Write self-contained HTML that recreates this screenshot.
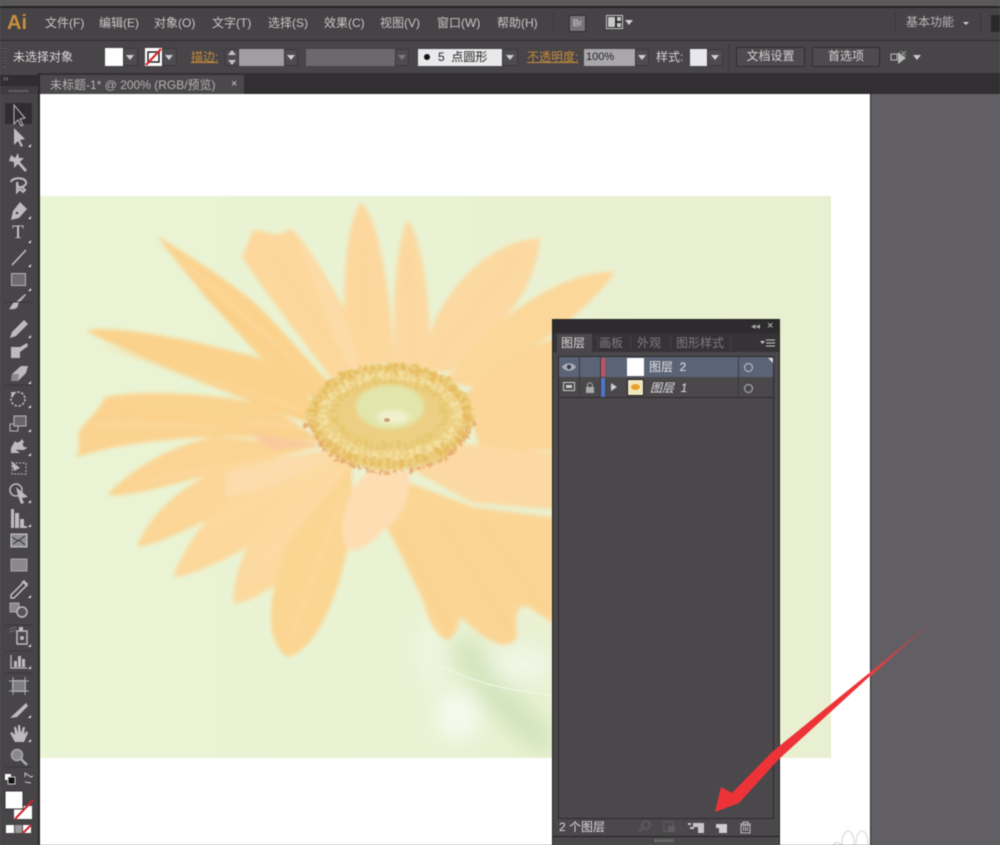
<!DOCTYPE html>
<html lang="zh"><head><meta charset="utf-8"><title>Illustrator</title>
<style>
html,body{margin:0;padding:0;background:#615f63}
#p{position:relative;width:1000px;height:845px;overflow:hidden;background:#615f63;font-family:"Liberation Sans","Noto Sans CJK SC",sans-serif;font-size:12px;color:#c9c7c6;filter:blur(.4px)}
#p div,#p span{position:absolute}
span{white-space:nowrap;line-height:14px}
.dd{background:#4e4c4f;border:1px solid #3a383b;box-sizing:border-box}
.tri{width:0;height:0;border-left:4px solid transparent;border-right:4px solid transparent;border-top:5px solid #d0cfd0}
.btn{background:#4d4b4e;border:1px solid #2f2d30;box-sizing:border-box;text-align:center;line-height:17px;color:#d5d3d3;height:20px}
.o{color:#c98c3c;text-decoration:underline}
</style></head><body><div id="p">
<!-- top chrome -->
<div style="left:0;top:0;width:1000px;height:6px;background:#5a5859"></div>
<div style="left:0;top:6px;width:1000px;height:2px;background:#262426"></div>
<div style="left:0;top:8px;width:1000px;height:32px;background:#464347"></div>
<div style="left:0;top:40px;width:1000px;height:1px;background:#2f2d2f"></div>
<div style="left:0;top:41px;width:1000px;height:32px;background:#474548"></div>
<div style="left:0;top:73px;width:1000px;height:21px;background:#312f31"></div>
<span style="left:7px;top:11px;font-size:20px;line-height:24px;font-weight:bold;color:#c98f3d">Ai</span>
<span style="left:45px;top:16px">文件(F)</span><span style="left:99px;top:16px">编辑(E)</span><span style="left:154px;top:16px">对象(O)</span><span style="left:212px;top:16px">文字(T)</span><span style="left:268px;top:16px">选择(S)</span><span style="left:324px;top:16px">效果(C)</span><span style="left:380px;top:16px">视图(V)</span><span style="left:437px;top:16px">窗口(W)</span><span style="left:497px;top:16px">帮助(H)</span>
<div style="left:553px;top:12px;width:1px;height:20px;background:#39373a"></div>
<div style="left:569px;top:15px;width:15px;height:15px;background:#777578;border:1px solid #2f2d30;font-size:9px;line-height:15px;text-align:center;color:#d0d0d0">Br</div>
<div style="left:606px;top:15px;width:17px;height:14px;background:#2a282a;border:1px solid #ccc;box-sizing:border-box"></div>
<div style="left:608px;top:17px;width:7px;height:10px;background:#c9c8c9"></div><div style="left:617px;top:17px;width:4px;height:4px;background:#c9c8c9"></div><div style="left:617px;top:23px;width:4px;height:4px;background:#c9c8c9"></div>
<div class="tri" style="left:625px;top:20px"></div>
<div style="left:895px;top:12px;width:1px;height:20px;background:#39373a"></div>
<span style="left:906px;top:15px;color:#b9b7b7">基本功能</span>
<div class="tri" style="left:963px;top:22px;border-left-width:3px;border-right-width:3px;border-top-width:3px"></div>
<div style="left:980px;top:12px;width:1px;height:20px;background:#39373a"></div>
<div style="left:991px;top:15px;width:9px;height:17px;background:#2a282b"></div>
<!-- control bar -->
<div style="left:4px;top:48px;width:2px;height:19px;background:repeating-linear-gradient(#7a787a 0 1px,#333 1px 3px)"></div>
<span style="left:13px;top:50px;color:#dcdada">未选择对象</span>
<div style="left:105px;top:48px;width:18px;height:18px;background:#fff"></div>
<div class="dd" style="left:123px;top:48px;width:15px;height:18px"></div><div class="tri" style="left:126px;top:55px"></div>
<div style="left:145px;top:48px;width:17px;height:18px;background:#fff"></div>
<svg style="position:absolute;left:145px;top:48px" width="17" height="18"><rect x="3" y="4" width="11" height="10" fill="none" stroke="#222" stroke-width="1.5"/><path d="M1 17L16 1" stroke="#d4262c" stroke-width="2.2"/></svg>
<div class="dd" style="left:162px;top:48px;width:15px;height:18px"></div><div class="tri" style="left:165px;top:55px"></div>
<span class="o" style="left:191px;top:50px">描边:</span>
<div class="dd" style="left:225px;top:49px;width:14px;height:17px"></div>
<div style="left:228px;top:50px;width:0;height:0;border-left:4px solid transparent;border-right:4px solid transparent;border-bottom:5px solid #c4c3c4"></div>
<div class="tri" style="left:228px;top:60px;border-top-color:#c4c3c4"></div>
<div style="left:239px;top:49px;width:45px;height:17px;background:#a09ea2"></div>
<div class="dd" style="left:284px;top:49px;width:14px;height:17px"></div><div class="tri" style="left:287px;top:55px"></div>
<div style="left:306px;top:49px;width:89px;height:17px;background:#6b696c"></div>
<div class="dd" style="left:395px;top:49px;width:14px;height:17px"></div><div class="tri" style="left:398px;top:55px;border-top-color:#7d7b7e"></div>
<div style="left:418px;top:49px;width:84px;height:17px;background:#e9e8ea"></div>
<div style="left:424px;top:54px;width:6px;height:6px;border-radius:50%;background:#111"></div>
<span style="left:438px;top:50px;color:#222">5&nbsp; 点圆形</span>
<div class="dd" style="left:502px;top:49px;width:16px;height:17px"></div><div class="tri" style="left:506px;top:55px"></div>
<span class="o" style="left:527px;top:50px">不透明度:</span>
<div style="left:584px;top:49px;width:51px;height:17px;background:#a9a7aa"></div>
<span style="left:586px;top:50px;color:#222;font-size:11px">100%</span>
<div class="dd" style="left:635px;top:49px;width:14px;height:17px"></div><div class="tri" style="left:638px;top:55px"></div>
<span style="left:656px;top:50px;color:#d5d3d3">样式:</span>
<div style="left:690px;top:49px;width:17px;height:17px;background:#e9e7ee"></div>
<div class="dd" style="left:707px;top:49px;width:16px;height:17px"></div><div class="tri" style="left:711px;top:55px"></div>
<div style="left:728px;top:44px;width:1px;height:28px;background:#3b393c"></div>
<div class="btn" style="left:736px;top:47px;width:69px">文档设置</div>
<div class="btn" style="left:812px;top:47px;width:68px">首选项</div>
<svg style="position:absolute;left:890px;top:49px" width="34" height="18"><rect x="1" y="5" width="6" height="6" fill="none" stroke="#bbb"/><path d="M8 3L16 9L8 15Z" fill="#bbb"/><path d="M11 2L16 7M16 2L11 7" stroke="#999"/><path d="M23 6h8l-4 5z" fill="#ccc"/></svg>
<!-- tab -->
<div style="left:40px;top:75px;width:204px;height:19px;background:#4a484b"></div>
<span style="left:50px;top:78px;color:#b5b3b3">未标题-1* @ 200% (RGB/预览)</span>
<span style="left:231px;top:77px;color:#ccc;font-size:11px">×</span>
<!-- canvas -->
<div style="left:40px;top:94px;width:830px;height:751px;background:#fff"></div>
<div style="left:870px;top:94px;width:1px;height:751px;background:#2c2a2c"></div>
<!-- flower image -->
<svg style="position:absolute;left:40px;top:196px" width="791" height="562" viewBox="40 196 791 562">
<defs>
<filter id="b" x="-5%" y="-5%" width="110%" height="110%"><feGaussianBlur stdDeviation="2"/></filter>
<filter id="s" x="-5%" y="-5%" width="110%" height="110%"><feGaussianBlur stdDeviation="3"/></filter>
<filter id="d" x="-5%" y="-5%" width="110%" height="110%"><feTurbulence type="turbulence" baseFrequency=".13" numOctaves="2" seed="4"/><feDisplacementMap in="SourceGraphic" scale="9" xChannelSelector="R" yChannelSelector="G"/><feGaussianBlur stdDeviation=".8"/></filter>
<filter id="b2" x="-20%" y="-20%" width="140%" height="140%"><feGaussianBlur stdDeviation="10"/></filter>
<linearGradient id="bg" x1="0" y1="0" x2="1" y2="0"><stop offset="0" stop-color="#eaf5d5"/><stop offset="1" stop-color="#e9efd1"/></linearGradient>
</defs>
<rect x="40" y="196" width="791" height="562" fill="url(#bg)"/>
<g filter="url(#b2)"><ellipse cx="458" cy="715" rx="22" ry="24" fill="#fafdf6" opacity=".8"/><ellipse cx="432" cy="650" rx="12" ry="40" fill="#f6fbf0" opacity=".5"/><path d="M448 640L475 640C495 680 530 700 553 735L553 758L525 745C495 715 465 690 448 640Z" fill="#d2e4bc"/><ellipse cx="520" cy="665" rx="30" ry="18" fill="#f4f8ec" opacity=".8"/></g>
<path d="M443 667C470 680 500 690 553 695" fill="none" stroke="#f6fbf0" stroke-width="1.2" opacity=".7"/>
<g filter="url(#b)">
<path d="M360 203C345 230 342 280 345 365L395 365C390 290 378 212 360 203Z" fill="#fcd89f"/>
<path d="M407 220C395 250 392 300 395 368L430 368C432 300 420 230 407 220Z" fill="#fcd9a1"/>
<path d="M253 230L242 257C270 300 310 350 340 390L372 372C345 300 305 240 290 228C280 240 265 230 253 230Z" fill="#fcd89d"/>
<path d="M295 232C320 260 345 310 360 365L345 375C330 320 310 270 295 232Z" fill="#fcdba6"/>
<path d="M540 238C500 240 460 270 435 320L418 372L450 372C490 335 535 300 540 238Z" fill="#fcd9a1"/>
<path d="M615 272C560 270 490 320 445 382L480 388C530 350 590 310 615 272Z" fill="#fcd79a"/>
<path d="M600 320C540 340 490 370 465 395L480 450L600 450Z" fill="#fbd698"/>
<path d="M157 236C200 262 250 295 270 318L345 400L300 395C250 350 190 280 157 236Z" fill="#fbd28c"/>
<path d="M85 330C130 325 210 345 260 358L312 400L332 428L300 420C230 392 130 355 85 330Z" fill="#fbd28b"/>
<path d="M105 397C150 388 220 395 270 405L322 442L250 437C180 435 110 445 75 458C82 448 78 440 78 433C88 418 98 412 105 397Z" fill="#fbd390"/>
<path d="M107 495C130 470 170 445 215 437L325 445L220 472C180 482 130 498 107 495Z" fill="#fbd493"/>
<path d="M137 547C150 510 190 480 230 465L345 448L250 500C200 522 160 545 137 547Z" fill="#fbd696"/>
<path d="M173 577C190 530 230 490 270 470L350 450L290 522C240 552 200 575 173 577Z" fill="#fcd89c"/>
<path d="M233 603C235 550 270 500 310 470L355 455L310 560C280 582 250 605 233 603Z" fill="#fcd99f"/>
<path d="M287 657C265 640 265 600 290 540L352 465L352 520C345 580 320 650 287 657Z" fill="#fbd592"/>
<path d="M387 527L410 483L473 507L600 523L600 623L553 623L527 606C518 606 514 612 517 635C515 645 503 648 490 640C480 635 470 625 460 617C458 630 452 640 447 640C435 635 428 620 423 600Z" fill="#fbd594"/>
<path d="M412 470L457 443L600 457L600 513L473 503Z" fill="#fcd9a2"/>
<path d="M380 463C400 462 412 470 410 485C405 510 395 525 383 530C372 545 358 552 350 550C342 548 340 530 344 515C348 495 355 478 380 463Z" fill="#fddeb2"/>
<path d="M225 473C260 460 310 452 340 455C310 470 260 495 225 497Z" fill="#fcdcaa"/>
<path d="M250 432C280 437 310 442 325 445L270 450Z" fill="#f9cb9c"/>
</g>
<g filter="url(#s)" fill="none" stroke-width="3" opacity=".55">
<path d="M180 258L320 385M100 345L300 410M95 425L300 425M150 480L320 450M200 530L335 460M250 580L340 470M290 640L345 490" stroke="#fddfae"/>
<path d="M200 290L330 395M120 350L310 420M110 410L310 435M400 530L450 630M440 520L510 630M480 520L545 610" stroke="#f9cb82"/>
<path d="M362 230L366 360M408 250L412 365M270 250L355 380M515 260L430 365" stroke="#f9cf8e"/>
</g>
<g filter="url(#d)">
<ellipse cx="388" cy="414" rx="84" ry="53" fill="#eccf82"/>
<path d="M306 420C315 450 350 470 388 470C430 470 462 450 472 418" fill="none" stroke="#e6ad70" stroke-width="4" stroke-dasharray="6 2 4 3"/>
<ellipse cx="388" cy="414" rx="77" ry="47" fill="none" stroke="#e8bd62" stroke-width="8" stroke-dasharray="5 3 3 4 6 2"/>
<ellipse cx="388" cy="413" rx="67" ry="40" fill="none" stroke="#f3df9e" stroke-width="8" stroke-dasharray="4 3 2 4 5 3"/>
<ellipse cx="388" cy="412" rx="55" ry="32" fill="none" stroke="#e7c770" stroke-width="7" stroke-dasharray="4 3 3 2 5 3"/>
</g>
<g filter="url(#b)">
<ellipse cx="390" cy="407" rx="34" ry="22" fill="#e2e6ac"/>
<ellipse cx="393" cy="417" rx="16" ry="7" fill="#f0f0cc"/>
</g>
<ellipse cx="387" cy="420" rx="3" ry="2" fill="#c8a07a"/>
</svg>
<!-- left toolbar -->
<div style="left:0;top:73px;width:38px;height:772px;background:#474548"></div>
<div style="left:0;top:75px;width:38px;height:11px;background:#2f2d2f"></div>
<span style="left:3px;top:72px;font-size:8px;color:#aaa">››</span>
<div style="left:0;top:86px;width:38px;height:8px;background:#3e3c3f"></div>
<div style="left:9px;top:90px;width:19px;height:2px;background:repeating-linear-gradient(90deg,#8a888a 0 1px,#333 1px 2px)"></div>
<div style="left:38px;top:73px;width:2px;height:772px;background:#2a282a"></div>
<div style="left:5px;top:103px;width:27px;height:21px;background:#2f2d30"></div>
<svg style="position:absolute;left:0;top:95px" width="38" height="750" viewBox="0 95 38 750" fill="#bdbbbd" stroke="none">
<path d="M14 105V124L18 120L21 126L23 125L20 119L25 118Z" fill="none" stroke="#bdbbbd"/>
<path d="M14 128V145L18 141L21 147L23 146L20 140L25 139Z"/>
<path d="M11 155L15 158L18 153L19 158L24 158L20 162L27 170L25 172L18 164L14 168L14 162L9 161Z"/>
<path d="M11 182C12 177 25 177 26 182C27 185 22 188 18 187L17 182V192L20 189L23 192L25 190L22 187" fill="none" stroke="#bdbbbd" stroke-width="2"/>
<path d="M20 202L27 209L19 218L11 220L13 211Z"/><circle cx="17" cy="213" r="1.3" fill="#474548"/>
<text x="18" y="238" text-anchor="middle" font-family="Liberation Serif" font-size="19" fill="#cfcdcf">T</text>
<path d="M12 265L26 250" stroke="#c4c2c4" stroke-width="1.5"/>
<rect x="11.5" y="273.500" width="14" height="12" fill="#6f6d70" stroke="#b5b3b5"/>
<path d="M26 295L18 304C19 308 14 310 9 309C12 306 12 302 16 302L25 294Z"/>
<path d="M24 320L28 324L16 336L10 338L12 332Z"/>
<path d="M11 347H20L27 343L28 346L20 352V358H11Z"/>
<path d="M12 374L21 366H28L26 373L18 381H11Z"/><path d="M12 374H19L18 381H11Z" fill="#8a888a"/>
<circle cx="18" cy="399" r="7" fill="none" stroke="#bdbbbd" stroke-width="1.5" stroke-dasharray="2.500 1.500"/><path d="M11 392L16 392L12 398Z"/>
<rect x="10" y="424" width="8" height="7" fill="none" stroke="#bdbbbd"/><rect x="14" y="416" width="12" height="10" fill="#666467" stroke="#bdbbbd"/>
<path d="M11 448L15 441C17 444 20 442 22 439L24 442C21 445 24 448 27 447C25 452 19 449 16 450L20 453L11 453Z"/>
<rect x="12" y="463" width="14" height="11" fill="none" stroke="#bdbbbd" stroke-dasharray="2 1.500"/><path d="M11 461L20 468L14 471Z"/>
<ellipse cx="16" cy="490" rx="6" ry="6" fill="none" stroke="#bdbbbd" stroke-width="1.5"/><path d="M16 487L28 497L22 498L24 503L21 504L19 499Z"/>
<path d="M11 509H14V528H11ZM15 513H19V528H15ZM20 519H24V528H20ZM21 526H27V528H21Z"/>
<rect x="11" y="534" width="16" height="13" fill="#918f92" stroke="#ccc"/><path d="M12 537L18 541L25 536M13 544L19 540L25 545" stroke="#333" fill="none"/>
<rect x="11" y="559" width="16" height="12" fill="#8a888b" stroke="#aaa"/>
<path d="M24 581L27 585L24 588L14 598L11 598L11 595L21 585Z" fill="none" stroke="#c4c2c4" stroke-width="1.500"/><path d="M21 581L27 587L28 583Z"/>
<rect x="10" y="603" width="9" height="9" fill="#8a888b" stroke="#aaa"/><circle cx="22" cy="612" r="5" fill="#555356" stroke="#bdbbbd" stroke-width="1.500"/>
<path d="M10 629L16 627M10 632L16 630" stroke="#aaa" stroke-dasharray="1 1"/><rect x="17" y="631" width="10" height="13" fill="none" stroke="#bdbbbd" stroke-width="1.500"/><circle cx="22" cy="638" r="2"/><rect x="19" y="627" width="4" height="4"/>
<path d="M11 655V668H27" fill="none" stroke="#bdbbbd" stroke-width="1.300"/><path d="M14 661H17V667H14ZM18 656H21V667H18ZM22 659H25V667H22Z"/>
<rect x="12.500" y="680.500" width="13" height="11" fill="#807e81" stroke="#aaa"/><path d="M9 681H29M9 691H29M13 677V695M25 677V695" stroke="#aaa" fill="none"/>
<path d="M10 718L26 703L28 706L17 717Z"/>
<path d="M15 742L10 733L12 732L15 735L14 727L16 727L18 733L18 725L20 725L21 733L23 727L25 727L24 734L27 731L28 733L24 742Z"/>
<circle cx="17" cy="755" r="5.500" fill="#8a888b" stroke="#aaa" stroke-width="1.500"/><path d="M21 759L27 765" stroke="#aaa" stroke-width="2.500"/>
<path d="M5 302H33M5 385H33M5 625H33M5 651H33M5 673H33M5 767H33" stroke="#39373a"/>
<path d="M31 147h-3l3-3zM31 219h-3l3-3zM31 243h-3l3-3zM31 267h-3l3-3zM31 291h-3l3-3zM31 338h-3l3-3zM31 384h-3l3-3zM31 408h-3l3-3zM31 432h-3l3-3zM31 456h-3l3-3zM31 503h-3l3-3zM31 527h-3l3-3zM31 598h-3l3-3zM31 647h-3l3-3zM31 669h-3l3-3zM31 718h-3l3-3zM31 742h-3l3-3z" fill="#e0dfe0"/>
<rect x="5" y="774" width="6" height="6" fill="#fff"/><rect x="8" y="777" width="7" height="7" fill="#111" stroke="#ccc"/>
<path d="M25 777L25 773L31 777L33 776M31 783L25 782" stroke="#ccc" fill="none"/>
<rect x="14" y="806" width="18" height="13" fill="#fff"/><path d="M15 819L33 800" stroke="#d4262c" stroke-width="2"/>
<rect x="5" y="791" width="18" height="18" fill="#fff" stroke="#333"/>
<rect x="6" y="825" width="8" height="8" fill="#fff"/><rect x="15" y="825" width="7" height="8" fill="#999"/><rect x="23" y="825" width="8" height="8" fill="#fff"/><path d="M23 833L31 825" stroke="#d4262c" stroke-width="2"/>
</svg>
<!-- doodle -->
<svg style="position:absolute;left:830px;top:825px" width="40" height="20"><g fill="none" stroke="#e2e2e2" stroke-width="1.500"><ellipse cx="18" cy="18" rx="6" ry="12"/><ellipse cx="32" cy="18" rx="6" ry="12"/><path d="M3 20C5 17 9 17 11 20"/></g></svg>
<!-- layers panel -->
<div style="left:553px;top:320px;width:226px;height:525px;background:#4a484b;outline:1px solid #222"></div>
<div style="left:553px;top:320px;width:226px;height:13px;background:#2d2b2d;border-radius:2px 2px 0 0"></div>
<span style="left:751px;top:320px;font-size:9px;color:#aaa;line-height:13px">◂◂</span>
<span style="left:767px;top:320px;font-size:11px;color:#ccc;line-height:13px">×</span>
<div style="left:553px;top:333px;width:226px;height:19px;background:#353336"></div>
<div style="left:557px;top:334px;width:35px;height:18px;background:#4a484b"></div>
<span style="left:561px;top:336px;color:#dcdada">图层</span>
<span style="left:599px;top:336px;color:#7e7c7f">画板</span>
<span style="left:637px;top:336px;color:#7e7c7f">外观</span>
<span style="left:676px;top:336px;color:#7e7c7f">图形样式</span>
<div style="left:597px;top:335px;width:1px;height:15px;background:#444"></div><div style="left:630px;top:335px;width:1px;height:15px;background:#444"></div><div style="left:670px;top:335px;width:1px;height:15px;background:#444"></div><div style="left:730px;top:335px;width:1px;height:15px;background:#444"></div>
<svg style="position:absolute;left:760px;top:339px" width="16" height="9"><path d="M0 2h5l-2.500 3z" fill="#ccc"/><path d="M6 1h9M6 4h9M6 7h9" stroke="#ccc"/></svg>
<div style="left:559px;top:357px;width:214px;height:461px;background:#4a484b;outline:1px solid #2d2b2d"></div>
<div style="left:559px;top:357px;width:214px;height:20px;background:#5b6476"></div>
<div style="left:559px;top:377px;width:214px;height:21px;background:#4a484b;border-bottom:1px solid #2d2b2d;box-sizing:border-box"></div>
<div style="left:579px;top:357px;width:1px;height:41px;background:#3a383b"></div>
<div style="left:600px;top:357px;width:1px;height:41px;background:#3a383b"></div>
<div style="left:738px;top:357px;width:1px;height:41px;background:#3a383b"></div>
<div style="left:601px;top:358px;width:4px;height:19px;background:#c25560"></div>
<div style="left:601px;top:378px;width:4px;height:19px;background:#4f74c8"></div>
<svg style="position:absolute;left:561px;top:361px" width="16" height="12"><path d="M1 6C4 1 12 1 15 6C12 11 4 11 1 6Z" fill="#a8adb8"/><circle cx="8" cy="6" r="2.200" fill="#3a3d46"/></svg>
<svg style="position:absolute;left:563px;top:382px" width="12" height="10"><rect x=".5" y=".5" width="11" height="8" fill="none" stroke="#ccc"/><rect x="3" y="3" width="6" height="3" fill="#ccc"/></svg>
<svg style="position:absolute;left:585px;top:382px" width="10" height="11"><path d="M2.500 5V3.500C2.500 0 7.500 0 7.500 3.500V5" fill="none" stroke="#aaa"/><rect x="1" y="5" width="8" height="6" fill="#aaa"/></svg>
<div style="left:611px;top:383px;width:0;height:0;border-top:4px solid transparent;border-bottom:4px solid transparent;border-left:6px solid #ccc"></div>
<div style="left:627px;top:358px;width:17px;height:18px;background:#fff"></div>
<div style="left:627px;top:379px;width:17px;height:17px;background:#f0e8bd;border:1px solid #222;box-sizing:border-box"></div>
<div style="left:631px;top:384px;width:9px;height:6px;background:#e8a030;border-radius:50%"></div>
<span style="left:649px;top:360px;color:#e5e4e6">图层&nbsp; 2</span>
<span style="left:650px;top:381px;color:#e0dfe0;font-style:italic">图层&nbsp; 1</span>
<div style="left:744px;top:363px;width:7px;height:7px;border:1px solid #c4c6cc;border-radius:50%"></div>
<div style="left:744px;top:384px;width:7px;height:7px;border:1px solid #bbb;border-radius:50%"></div>
<div style="left:768px;top:358px;width:0;height:0;border-left:5px solid transparent;border-top:5px solid #e0e0e0"></div>
<span style="left:559px;top:820px;color:#dedcdd">2 个图层</span>
<svg style="position:absolute;left:636px;top:820px" width="120" height="14">
<circle cx="10" cy="5" r="4" fill="none" stroke="#5f5d60" stroke-width="1.500"/><path d="M7 8L3 12" stroke="#5f5d60" stroke-width="1.500"/>
<rect x="28" y="2" width="9" height="9" fill="none" stroke="#5f5d60"/><rect x="32" y="6" width="7" height="6" fill="#5f5d60"/>
<path d="M52 3h3v2h-3zM57 3h11v10h-6V7h-5z" fill="#c8c6c8"/><path d="M54 7h4v2h-4z" fill="#c8c6c8"/>
<path d="M80 4h11v9h-8V9h-3z" fill="#d0ced0"/><path d="M79 8h4v4h-4z" fill="#4a484b"/>
<path d="M104 4h11M107 4V2h5v2M105 5.500h9V13h-9z" fill="none" stroke="#c0bec0"/><path d="M107.500 7v4M109.500 7v4M111.500 7v4" stroke="#c0bec0"/>
</svg>
<div style="left:553px;top:836px;width:226px;height:1px;background:#222"></div>
<div style="left:655px;top:839px;width:20px;height:3px;background:repeating-linear-gradient(90deg,#999 0 1px,#333 1px 2px)"></div>
<!-- arrow -->
<svg style="position:absolute;left:0;top:0" width="1000" height="845"><defs><linearGradient id="a" x1="943" y1="612" x2="870" y2="675" gradientUnits="userSpaceOnUse"><stop offset="0" stop-color="#a8444a" stop-opacity=".4"/><stop offset="1" stop-color="#e84046"/></linearGradient></defs>
<path d="M870 676L778 760L739 803L715 812L721 787L732 793L772 752L868 674Z" fill="#ee3338"/><path d="M943 612L870 677L868 674Z" fill="url(#a)"/></svg>
</div></body></html>
